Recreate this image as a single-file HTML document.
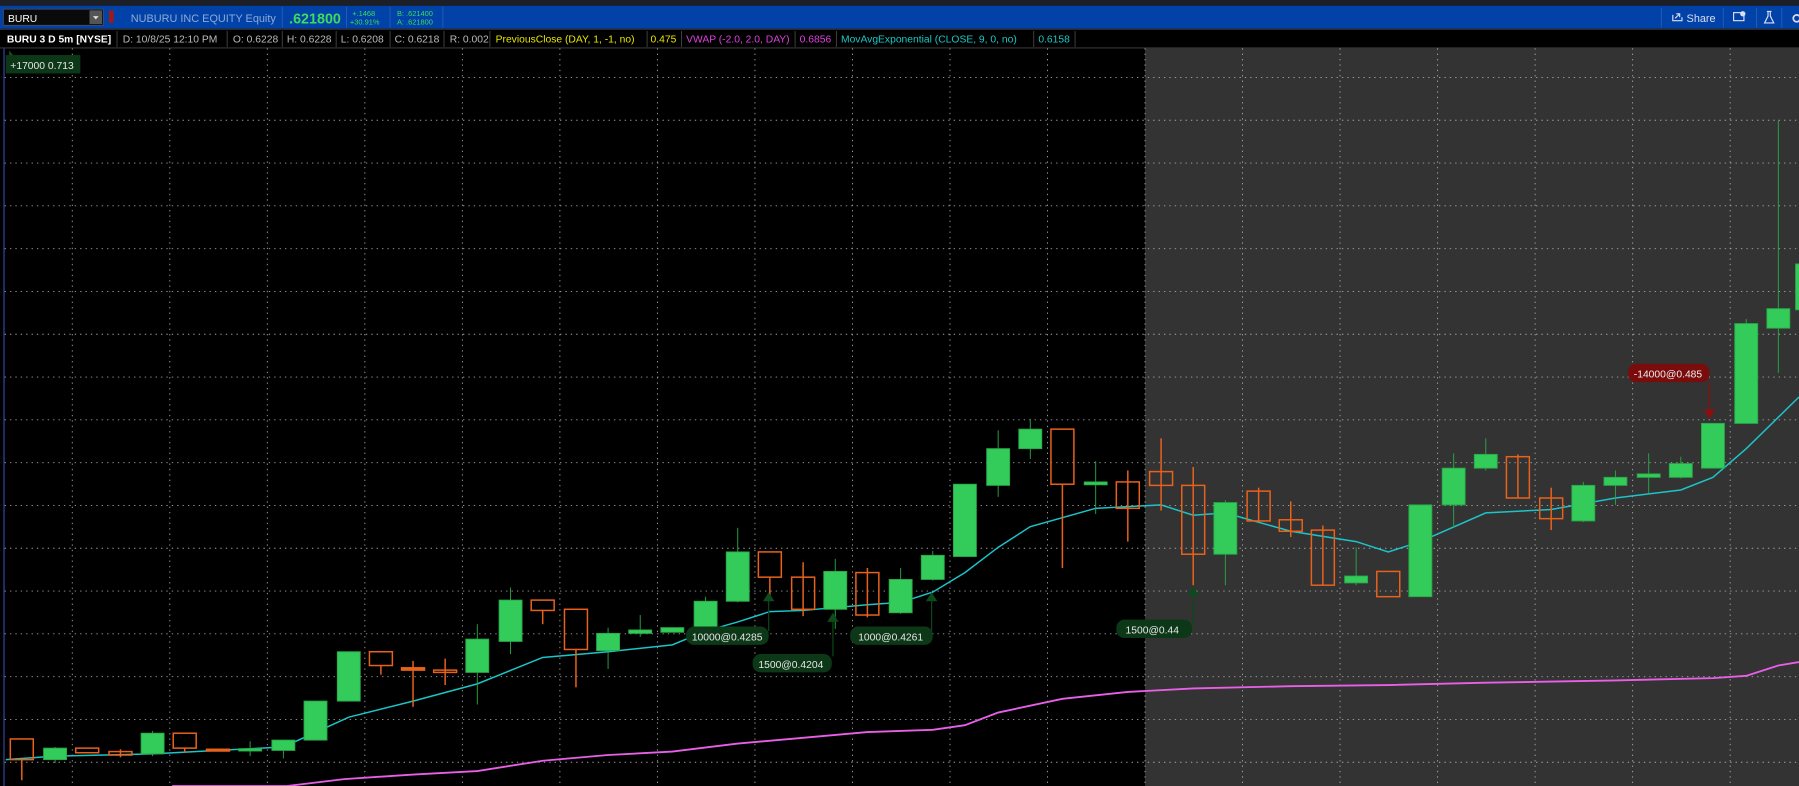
<!DOCTYPE html>
<html><head><meta charset="utf-8"><style>
html,body{margin:0;padding:0;background:#000;width:1799px;height:786px;overflow:hidden}
svg{display:block}
text{font-family:"Liberation Sans","DejaVu Sans",sans-serif}
</style></head><body>
<svg width="1799" height="786" viewBox="0 0 1568 685" preserveAspectRatio="none" xmlns="http://www.w3.org/2000/svg">
<rect x="0" y="0" width="1568" height="685" fill="#000"/>
<rect x="0" y="0" width="1568" height="5" fill="#1c1f26"/>
<rect x="0" y="5" width="1568" height="20" fill="#0142a8"/>
<!-- symbol box -->
<rect x="3" y="8" width="87" height="14" fill="#0a0a0a" stroke="#555" stroke-width="0.6"/>
<text x="7" y="19" font-size="9" fill="#fff">BURU</text>
<rect x="78" y="9" width="11" height="12" fill="#555"/>
<path d="M81 14 L86 14 L83.5 17 Z" fill="#ddd"/>
<rect x="95" y="9" width="4" height="11" fill="#a01818"/>
<text x="114" y="19" font-size="9.5" fill="#8fa9d6">NUBURU INC EQUITY Equity</text>
<line x1="246" y1="6" x2="246" y2="24" stroke="#2a5bb5" stroke-width="0.8"/>
<text x="252" y="20.5" font-size="12.5" font-weight="bold" fill="#3ddc5c">.621800</text>
<line x1="302" y1="6" x2="302" y2="24" stroke="#2a5bb5" stroke-width="0.8"/>
<text x="307" y="14" font-size="6.5" fill="#3ddc5c">+.1468</text>
<text x="305" y="21.5" font-size="6.5" fill="#3ddc5c">+30.91%</text>
<line x1="340" y1="6" x2="340" y2="24" stroke="#2a5bb5" stroke-width="0.8"/>
<text x="346" y="14" font-size="6.5" fill="#3ddc5c">B: .621400</text>
<text x="346" y="21.5" font-size="6.5" fill="#3ddc5c">A: .621800</text>
<line x1="386" y1="6" x2="386" y2="24" stroke="#2a5bb5" stroke-width="0.8"/>
<!-- right icons -->
<line x1="1448" y1="7" x2="1448" y2="24" stroke="#2a5bb5" stroke-width="0.8"/>
<path d="M1458 13 v5 h8 v-3 M1460 16 l4 -4 m-3 0 h3 v3" fill="none" stroke="#dde" stroke-width="1"/>
<text x="1470" y="19" font-size="9.5" fill="#dde">Share</text>
<line x1="1502" y1="7" x2="1502" y2="24" stroke="#2a5bb5" stroke-width="0.8"/>
<rect x="1511" y="11" width="9" height="7" fill="none" stroke="#dde" stroke-width="1"/>
<circle cx="1519" cy="12" r="2.3" fill="#dde"/>
<line x1="1531" y1="7" x2="1531" y2="24" stroke="#2a5bb5" stroke-width="0.8"/>
<path d="M1540 10 h4 M1541 10 v4 l-3 6 h8 l-3 -6 v-4" fill="none" stroke="#dde" stroke-width="1"/>
<line x1="1553" y1="7" x2="1553" y2="24" stroke="#2a5bb5" stroke-width="0.8"/>
<circle cx="1566" cy="16" r="3" fill="none" stroke="#dde" stroke-width="1.5"/>
<!-- toolbar -->
<rect x="0" y="25" width="1568" height="17" fill="#000"/>
<line x1="0" y1="25.5" x2="1568" y2="25.5" stroke="#333" stroke-width="1"/>
<line x1="0" y1="41.8" x2="1568" y2="41.8" stroke="#444" stroke-width="0.8"/>
<g font-size="9" fill="#bbb">
<text x="6" y="37" font-weight="bold" fill="#fff">BURU 3 D 5m [NYSE]</text>
<text x="107" y="37">D: 10/8/25 12:10 PM</text>
<text x="203" y="37">O: 0.6228</text>
<text x="250" y="37">H: 0.6228</text>
<text x="297" y="37">L: 0.6208</text>
<text x="344" y="37">C: 0.6218</text>
<text x="392" y="37">R: 0.002</text>
<text x="432" y="37" fill="#e6e600">PreviousClose (DAY, 1, -1, no)</text>
<text x="567" y="37" fill="#e6e600">0.475</text>
<text x="598" y="37" fill="#e040e0">VWAP (-2.0, 2.0, DAY)</text>
<text x="697" y="37" fill="#e040e0">0.6856</text>
<text x="733" y="37" fill="#19c8c8">MovAvgExponential (CLOSE, 9, 0, no)</text>
<text x="905" y="37" fill="#19c8c8">0.6158</text>
</g>
<g stroke="#444" stroke-width="0.8">
<line x1="102" y1="27" x2="102" y2="41"/><line x1="198" y1="27" x2="198" y2="41"/><line x1="246" y1="27" x2="246" y2="41"/><line x1="293" y1="27" x2="293" y2="41"/><line x1="340" y1="27" x2="340" y2="41"/><line x1="387" y1="27" x2="387" y2="41"/><line x1="427" y1="27" x2="427" y2="41"/><line x1="564" y1="27" x2="564" y2="41"/><line x1="594" y1="27" x2="594" y2="41"/><line x1="693" y1="27" x2="693" y2="41"/><line x1="729" y1="27" x2="729" y2="41"/><line x1="901" y1="27" x2="901" y2="41"/><line x1="937" y1="27" x2="937" y2="41"/>
</g>
<!-- grey area -->
<rect x="998" y="42" width="570" height="643" fill="#333"/>
<line x1="3.5" y1="42" x2="3.5" y2="685" stroke="#2a3f8a" stroke-width="1.2"/>
<!-- grid -->
<g stroke="#bbb" stroke-width="0.8" stroke-dasharray="1.2 3.5" opacity="0.85">
<line x1="63" y1="42" x2="63" y2="685"/><line x1="148" y1="42" x2="148" y2="685"/><line x1="233" y1="42" x2="233" y2="685"/><line x1="318" y1="42" x2="318" y2="685"/><line x1="403" y1="42" x2="403" y2="685"/><line x1="488" y1="42" x2="488" y2="685"/><line x1="573" y1="42" x2="573" y2="685"/><line x1="658" y1="42" x2="658" y2="685"/><line x1="743" y1="42" x2="743" y2="685"/><line x1="828" y1="42" x2="828" y2="685"/><line x1="913" y1="42" x2="913" y2="685"/><line x1="998" y1="42" x2="998" y2="685"/><line x1="1083" y1="42" x2="1083" y2="685"/><line x1="1168" y1="42" x2="1168" y2="685"/><line x1="1253" y1="42" x2="1253" y2="685"/><line x1="1338" y1="42" x2="1338" y2="685"/><line x1="1423" y1="42" x2="1423" y2="685"/><line x1="1508" y1="42" x2="1508" y2="685"/>
<line x1="4" y1="67.5" x2="1568" y2="67.5"/><line x1="4" y1="104.8" x2="1568" y2="104.8"/><line x1="4" y1="142.1" x2="1568" y2="142.1"/><line x1="4" y1="179.4" x2="1568" y2="179.4"/><line x1="4" y1="216.7" x2="1568" y2="216.7"/><line x1="4" y1="254" x2="1568" y2="254"/><line x1="4" y1="291.3" x2="1568" y2="291.3"/><line x1="4" y1="328.6" x2="1568" y2="328.6"/><line x1="4" y1="365.9" x2="1568" y2="365.9"/><line x1="4" y1="403.2" x2="1568" y2="403.2"/><line x1="4" y1="440.5" x2="1568" y2="440.5"/><line x1="4" y1="477.8" x2="1568" y2="477.8"/><line x1="4" y1="515.1" x2="1568" y2="515.1"/><line x1="4" y1="552.4" x2="1568" y2="552.4"/><line x1="4" y1="589.7" x2="1568" y2="589.7"/><line x1="4" y1="627" x2="1568" y2="627"/><line x1="4" y1="664.3" x2="1568" y2="664.3"/>
</g>
<!-- VWAP -->
<polyline fill="none" stroke="#e860e8" stroke-width="1.6" points="150,685 250,685 300,679 360,675 416,672 473,663 530,658 586,655 643,648 700,643 756,638 813,636 841,632 870,621 926,609 983,603 1040,600 1125,598 1210,597 1295,595 1408,593 1493,591 1522,589 1550,580 1568,577"/>
<!-- EMA -->
<polyline fill="none" stroke="#1cc4c8" stroke-width="1.3" points="5,662 48,659 133,657 190,654 247,651 304,625 360,611 416,596 473,573 530,568 586,562 615,550 643,542 671,533 700,532 756,527 785,525 813,516 841,499 870,477 898,459 955,443 1012,440 1040,449 1068,447 1125,463 1182,472 1210,481 1238,472 1295,447 1352,444 1408,434 1465,427 1493,416 1522,391 1568,346"/>
<!-- green candles -->
<g fill="#33cc5a" stroke="#29a847" stroke-width="0.8">
<line x1="48" y1="651" x2="48" y2="665"/><rect x="38" y="652" width="20" height="10"/>
<line x1="133" y1="637" x2="133" y2="659"/><rect x="123" y="639" width="20" height="18"/>
<line x1="218" y1="646" x2="218" y2="659"/><rect x="208" y="652.5" width="20" height="2"/>
<line x1="247" y1="645" x2="247" y2="661"/><rect x="237" y="645" width="20" height="9"/>
<rect x="265" y="611" width="20" height="34"/>
<rect x="294" y="568" width="20" height="43"/>
<line x1="416" y1="544" x2="416" y2="614"/><rect x="406" y="557" width="20" height="29"/>
<line x1="445" y1="512" x2="445" y2="570"/><rect x="435" y="523" width="20" height="36"/>
<line x1="530" y1="547" x2="530" y2="583"/><rect x="520" y="552" width="20" height="15"/>
<line x1="558" y1="536" x2="558" y2="555"/><rect x="548" y="549" width="20" height="3"/>
<rect x="576" y="547" width="20" height="4"/>
<line x1="615" y1="520" x2="615" y2="555"/><rect x="605" y="524" width="20" height="24"/>
<line x1="643" y1="460" x2="643" y2="525"/><rect x="633" y="481" width="20" height="43"/>
<line x1="728" y1="487" x2="728" y2="548"/><rect x="718" y="498" width="20" height="33"/>
<line x1="785" y1="495" x2="785" y2="535"/><rect x="775" y="505" width="20" height="29"/>
<line x1="813" y1="480" x2="813" y2="506"/><rect x="803" y="484" width="20" height="21"/>
<rect x="831" y="422" width="20" height="63"/>
<line x1="870" y1="375" x2="870" y2="433"/><rect x="860" y="391" width="20" height="32"/>
<line x1="898" y1="365" x2="898" y2="400"/><rect x="888" y="374" width="20" height="17"/>
<line x1="955" y1="402" x2="955" y2="448"/><rect x="945" y="420" width="20" height="2.5"/>
<line x1="1068" y1="436" x2="1068" y2="510"/><rect x="1058" y="438" width="20" height="45"/>
<line x1="1182" y1="477" x2="1182" y2="510"/><rect x="1172" y="502" width="20" height="6"/>
<rect x="1228" y="440" width="20" height="80"/>
<line x1="1267" y1="395" x2="1267" y2="460"/><rect x="1257" y="408" width="20" height="32"/>
<line x1="1295" y1="382" x2="1295" y2="410"/><rect x="1285" y="396" width="20" height="12"/>
<line x1="1380" y1="420" x2="1380" y2="455"/><rect x="1370" y="423" width="20" height="31"/>
<line x1="1408" y1="410" x2="1408" y2="440"/><rect x="1398" y="416" width="20" height="7"/>
<line x1="1437" y1="395" x2="1437" y2="430"/><rect x="1427" y="413" width="20" height="3"/>
<line x1="1465" y1="398" x2="1465" y2="417"/><rect x="1455" y="404" width="20" height="12"/>
<rect x="1483" y="369" width="20" height="39"/>
<line x1="1522" y1="278" x2="1522" y2="283"/><rect x="1512" y="282" width="20" height="87"/>
<line x1="1550" y1="105" x2="1550" y2="325"/><rect x="1540" y="269" width="20" height="17"/>
<rect x="1565" y="230" width="10" height="40"/>
</g>
<!-- orange candles -->
<g fill="none" stroke="#e8621c" stroke-width="1.3">
<line x1="19" y1="662" x2="19" y2="680"/><rect x="9" y="644" width="20" height="18"/>
<rect x="66" y="652" width="20" height="4"/>
<line x1="105" y1="653" x2="105" y2="660"/><rect x="95" y="655" width="20" height="3"/>
<line x1="161" y1="652" x2="161" y2="656"/><rect x="151" y="639" width="20" height="13"/>
<rect x="180" y="653" width="20" height="1.5" fill="#e8621c"/>
<line x1="332" y1="580" x2="332" y2="588"/><rect x="322" y="568" width="20" height="12"/>
<line x1="360" y1="576" x2="360" y2="616"/><rect x="350" y="582" width="20" height="2" fill="#e8621c"/>
<line x1="388" y1="574" x2="388" y2="597"/><rect x="378" y="584" width="20" height="2"/>
<line x1="473" y1="532" x2="473" y2="544"/><rect x="463" y="523" width="20" height="9"/>
<line x1="502" y1="566" x2="502" y2="599"/><rect x="492" y="531" width="20" height="35"/>
<line x1="671" y1="503" x2="671" y2="520"/><rect x="661" y="481" width="20" height="22"/>
<line x1="700" y1="490" x2="700" y2="537"/><rect x="690" y="503" width="20" height="28"/>
<line x1="756" y1="495" x2="756" y2="538"/><rect x="746" y="499" width="20" height="37"/>
<line x1="926" y1="422" x2="926" y2="495"/><rect x="916" y="374" width="20" height="48"/>
<line x1="983" y1="410" x2="983" y2="472"/><rect x="973" y="420" width="20" height="23"/>
<line x1="1012" y1="382" x2="1012" y2="445"/><rect x="1002" y="411" width="20" height="12"/>
<line x1="1040" y1="407" x2="1040" y2="510"/><rect x="1030" y="423" width="20" height="60"/>
<line x1="1097" y1="425" x2="1097" y2="455"/><rect x="1087" y="428" width="20" height="26"/>
<line x1="1125" y1="437" x2="1125" y2="468"/><rect x="1115" y="453" width="20" height="10"/>
<line x1="1153" y1="458" x2="1153" y2="510"/><rect x="1143" y="462" width="20" height="48"/>
<rect x="1200" y="498" width="20" height="22"/>
<line x1="1323" y1="396" x2="1323" y2="434"/><rect x="1313" y="398" width="20" height="36"/>
<line x1="1352" y1="425" x2="1352" y2="462"/><rect x="1342" y="434" width="20" height="18"/>
</g>
<!-- trade labels -->
<path d="M8 44 L13 50 L8 50 Z" fill="#1e4d26"/>
<rect x="5" y="48" width="65" height="16" fill="#0d3818"/>
<text x="9" y="60" font-size="9" fill="#e6e6e6">+17000 0.713</text>
<g stroke="#0d4a1c" stroke-width="1"><line x1="670" y1="522" x2="670" y2="550"/><line x1="726" y1="540" x2="726" y2="572"/><line x1="812" y1="522" x2="812" y2="550"/><line x1="1040" y1="517" x2="1040" y2="545"/></g>
<g fill="#0d4a1c"><path d="M665 524 L670 516 L675 524Z"/><path d="M721 542 L726 534 L731 542Z"/><path d="M807 524 L812 516 L817 524Z"/><path d="M1035 519 L1040 511 L1045 519Z"/></g>
<g fill="#0d3818">
<rect x="598" y="546" width="72" height="16" rx="7"/>
<rect x="656" y="570" width="69" height="16" rx="7"/>
<rect x="741" y="546" width="72" height="16" rx="7"/>
<rect x="973" y="540" width="66" height="16" rx="7"/>
</g>
<g font-size="9" fill="#e6e6e6">
<text x="603" y="558">10000@0.4285</text>
<text x="661" y="582">1500@0.4204</text>
<text x="748" y="558">1000@0.4261</text>
<text x="981" y="552">1500@0.44</text>
</g>
<line x1="1490" y1="333" x2="1490" y2="360" stroke="#8a1010" stroke-width="1.2"/>
<path d="M1485 357 L1490 365 L1495 357Z" fill="#8a1010"/>
<rect x="1419" y="317" width="71" height="16" rx="7" fill="#7a0c0c"/>
<text x="1424" y="329" font-size="9" fill="#eee">-14000@0.485</text>
</svg>
</body></html>
